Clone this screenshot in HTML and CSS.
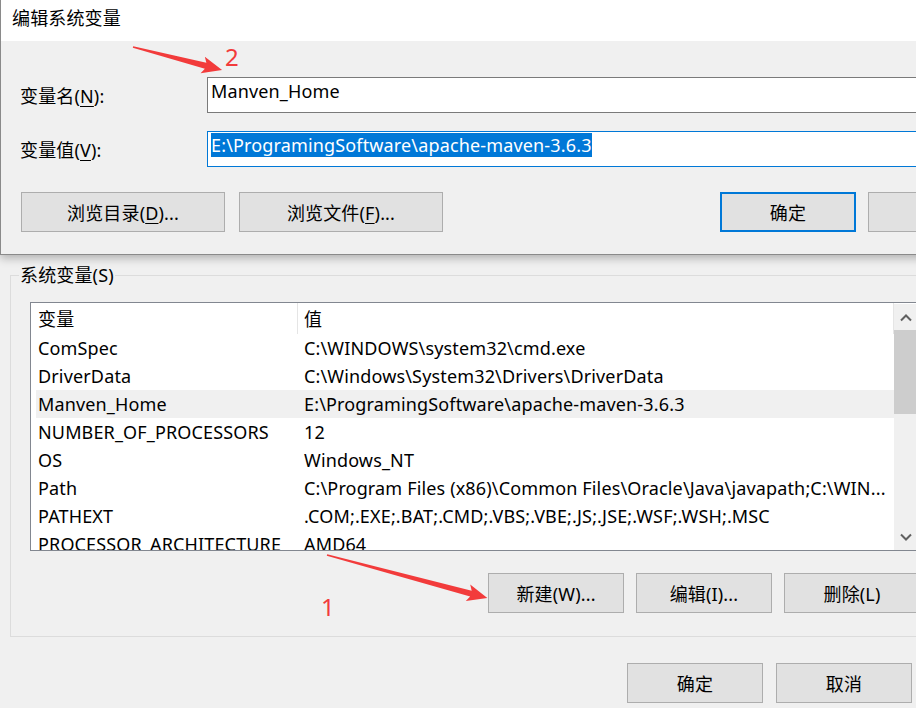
FILE: index.html
```html
<!DOCTYPE html>
<html lang="zh-CN">
<head>
    <meta charset="UTF-8">
    <meta name="viewport" content="width=device-width, initial-scale=1.0">
    <title>编辑系统变量</title>
    <link rel="stylesheet" href="styles.css">
</head>
<body>
    <!-- Environment variables window (behind) -->
    <div class="window">
        <fieldset class="group">
            <legend>系统变量(S)</legend>
            <div class="list">
                <div class="list-body">
                    <div class="list-head">
                        <div class="head-name">变量</div>
                        <div class="head-value">值</div>
                    </div>
                    <div class="row"><div class="cell-name">ComSpec</div><div class="cell-value">C:\WINDOWS\system32\cmd.exe</div></div>
                    <div class="row"><div class="cell-name">DriverData</div><div class="cell-value">C:\Windows\System32\Drivers\DriverData</div></div>
                    <div class="row selected"><div class="cell-name">Manven_Home</div><div class="cell-value">E:\ProgramingSoftware\apache-maven-3.6.3</div></div>
                    <div class="row"><div class="cell-name">NUMBER_OF_PROCESSORS</div><div class="cell-value">12</div></div>
                    <div class="row"><div class="cell-name">OS</div><div class="cell-value">Windows_NT</div></div>
                    <div class="row"><div class="cell-name">Path</div><div class="cell-value">C:\Program Files (x86)\Common Files\Oracle\Java\javapath;C:\WIN...</div></div>
                    <div class="row"><div class="cell-name">PATHEXT</div><div class="cell-value">.COM;.EXE;.BAT;.CMD;.VBS;.VBE;.JS;.JSE;.WSF;.WSH;.MSC</div></div>
                    <div class="row"><div class="cell-name">PROCESSOR_ARCHITECTURE</div><div class="cell-value">AMD64</div></div>
                </div>
                <div class="scrollbar">
                    <div class="sb-button">
                        <svg width="12" height="9" viewBox="0 0 12 9"><polyline points="1,7.5 6,2.5 11,7.5" fill="none" stroke="#606060" stroke-width="2"/></svg>
                    </div>
                    <div class="sb-thumb"></div>
                    <div class="sb-track"></div>
                    <div class="sb-button">
                        <svg width="12" height="9" viewBox="0 0 12 9"><polyline points="1,1.5 6,6.5 11,1.5" fill="none" stroke="#606060" stroke-width="2"/></svg>
                    </div>
                </div>
            </div>
            <div class="group-actions">
                <button class="button">新建(W)...</button>
                <button class="button">编辑(I)...</button>
                <button class="button">删除(L)</button>
            </div>
        </fieldset>
        <div class="window-actions">
            <button class="button">确定</button>
            <button class="button">取消</button>
        </div>
    </div>

    <!-- Edit dialog (on top) -->
    <div class="dialog">
        <div class="dialog-title">编辑系统变量</div>
        <div class="dialog-body">
            <div class="field">
                <div class="field-label">变量名(<u>N</u>):</div>
                <div class="textbox">Manven_Home</div>
            </div>
            <div class="field">
                <div class="field-label">变量值(<u>V</u>):</div>
                <div class="textbox focused"><span class="selection">E:\ProgramingSoftware\apache-maven-3.6.3</span></div>
            </div>
            <div class="dialog-buttons">
                <button class="button wide">浏览目录(<u>D</u>)...</button>
                <button class="button wide">浏览文件(<u>F</u>)...</button>
                <div class="dialog-actions">
                    <button class="button default">确定</button>
                    <button class="button">取消</button>
                </div>
            </div>
        </div>
    </div>

    <!-- Red annotations -->
    <svg class="annotations" width="916" height="708" viewBox="0 0 916 708">
        <g transform="translate(133 47) rotate(14.5)">
            <polygon points="0,-0.8 75,-3 72,-8.5 92,0 72,8.5 75,3 0,0.8" fill="#f23b3b"/>
        </g>
        <g transform="translate(327 555) rotate(15)">
            <polygon points="0,-0.8 149,-3 146,-8.5 166,0 146,8.5 149,3 0,0.8" fill="#f23b3b"/>
        </g>
        <text class="mark" x="225" y="66">2</text>
        <text class="mark" x="321" y="616">1</text>
    </svg>
</body>
</html>
```

FILE: styles.css
```css
/* General Reset */
* {
    box-sizing: border-box;
}

body {
    margin: 0;
    width: 916px;
    height: 708px;
    position: relative;
    overflow: hidden;
    background-color: #f0f0f0;
    color: #000000;
    font-family: "Noto Sans", "Noto Sans CJK SC", sans-serif;
    font-size: 18px;
    letter-spacing: 0.15px;
}

u {
    text-decoration-thickness: 1px;
    text-underline-offset: 3px;
}

/* Buttons */
.button {
    width: 136px;
    height: 40px;
    padding: 0;
    background-color: #e1e1e1;
    border: 1px solid #adadad;
    border-radius: 0;
    color: #000000;
    font: inherit;
    letter-spacing: inherit;
    white-space: nowrap;
}

.button.wide {
    width: 204px;
}

.button.default {
    border: 2px solid #0078d7;
}

/* Window behind */
.window {
    width: 930px;
    padding: 265px 9px 0 10px;
}

.group {
    margin: 0;
    min-width: 0;
    border: 1px solid #dcdcdc;
    padding: 17px 0 23px 8px;
}

.group legend {
    padding: 0 1px;
    line-height: 20px;
}

/* List view */
.list {
    margin-left: 11px;
    width: 888px;
    height: 249px;
    border: 1px solid #828790;
    background-color: #ffffff;
    display: flex;
}

.list-body {
    flex: 1;
    overflow: hidden;
}

.list-head {
    display: flex;
    height: 31px;
    line-height: 32px;
}

.head-name {
    width: 267px;
    padding-left: 7px;
    border-right: 1px solid #e5e5e5;
}

.head-value {
    flex: 1;
    padding-left: 6px;
    border-right: 1px solid #e5e5e5;
}

.row {
    display: flex;
    height: 28px;
    line-height: 28px;
    margin-left: 5px;
    white-space: nowrap;
}

.row.selected {
    background-color: #f0f0f0;
}

.cell-name {
    width: 262px;
    padding-left: 2px;
    overflow: hidden;
}

.cell-value {
    flex: 1;
    padding-left: 6px;
    overflow: hidden;
}

/* Scrollbar */
.scrollbar {
    width: 23px;
    margin-top: 1px;
    background-color: #f0f0f0;
    display: flex;
    flex-direction: column;
}

.sb-button {
    height: 26px;
    display: flex;
    align-items: center;
    justify-content: center;
}

.sb-thumb {
    height: 84px;
    background-color: #cdcdcd;
}

.sb-track {
    flex: 1;
}

.group-actions {
    display: flex;
    justify-content: flex-end;
    gap: 12px;
    margin-top: 22px;
}

.window-actions {
    display: flex;
    justify-content: flex-end;
    gap: 13px;
    margin: 26px 9px 0 0;
}

/* Edit dialog */
.dialog {
    position: absolute;
    top: 0;
    left: 0;
    width: 1024px;
    height: 255px;
    background-color: #f0f0f0;
    border-left: 1px solid #8a8a8a;
    border-bottom: 1px solid #8a8a8a;
    box-shadow: 0 3px 9px rgba(0, 0, 0, 0.28);
}

.dialog-title {
    height: 41px;
    padding-left: 11px;
    line-height: 37px;
    background-color: #ffffff;
}

.dialog-body {
    padding: 36px 20px 0 19px;
}

.field {
    display: flex;
    align-items: center;
    height: 36px;
}

.field + .field {
    margin-top: 18px;
}

.field-label {
    width: 187px;
}

.textbox {
    flex: 1;
    height: 36px;
    padding: 1px 3px;
    line-height: 24px;
    background-color: #ffffff;
    border: 1px solid #7a7a7a;
    white-space: nowrap;
}

.textbox.focused {
    border-color: #0078d7;
}

.selection {
    display: inline-block;
    background-color: #0078d7;
    color: #ffffff;
}

.dialog-buttons {
    display: flex;
    gap: 14px;
    margin-top: 25px;
    padding-left: 1px;
}

.dialog-actions {
    margin-left: auto;
    display: flex;
    gap: 12px;
}

/* Annotations */
.annotations {
    position: absolute;
    top: 0;
    left: 0;
    pointer-events: none;
}

.mark {
    fill: #f23b3b;
    font-family: "Noto Sans", sans-serif;
    font-size: 24px;
    letter-spacing: 0;
}
```
